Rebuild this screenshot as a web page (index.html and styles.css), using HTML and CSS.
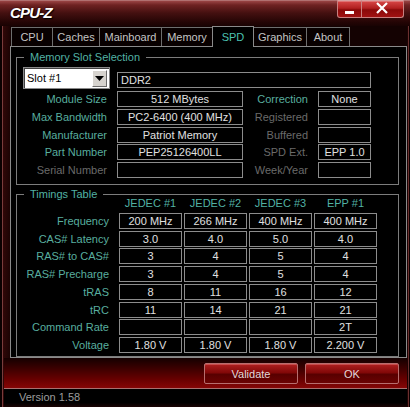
FILE: index.html
```html
<!DOCTYPE html>
<html>
<head>
<meta charset="utf-8">
<title>CPU-Z</title>
<link rel="stylesheet" href="styles.css">
</head>
<body>
<div class="window">
  <div class="titlebar">
    <span class="title">CPU-Z</span>
    <div class="winbtns">
      <span class="wbtn min"><svg width="25" height="17" viewBox="0 0 25 17"><rect x="8" y="11" width="9" height="3" fill="#fff"/></svg></span>
      <span class="wbtn close"><svg width="42" height="17" viewBox="0 0 42 17"><path d="M16 3 L26 13 M26 3 L16 13" stroke="#fff" stroke-width="2.2" fill="none"/></svg></span>
    </div>
  </div>

  <div class="tabs">
    <span class="tab w-cpu">CPU</span>
    <span class="tab w-caches">Caches</span>
    <span class="tab w-main">Mainboard</span>
    <span class="tab w-mem">Memory</span>
    <span class="tab w-spd active">SPD</span>
    <span class="tab w-gfx">Graphics</span>
    <span class="tab w-about">About</span>
  </div>

  <div class="panel">
    <fieldset class="group slots">
      <legend>Memory Slot Selection</legend>
      <div class="slot-row">
        <div class="select">
          <span class="select-text">Slot #1</span>
          <span class="select-arrow"><svg width="9" height="5" viewBox="0 0 9 5"><path d="M0 0 H9 L4.5 5 Z" fill="#000"/></svg></span>
        </div>
        <div class="box type">DDR2</div>
      </div>
      <div class="info-grid">
        <span class="lbl">Module Size</span><span class="box">512 MBytes</span>
        <span class="lbl">Correction</span><span class="box">None</span>

        <span class="lbl">Max Bandwidth</span><span class="box">PC2-6400 (400 MHz)</span>
        <span class="lbl dim">Registered</span><span class="box"></span>

        <span class="lbl">Manufacturer</span><span class="box">Patriot Memory</span>
        <span class="lbl dim">Buffered</span><span class="box"></span>

        <span class="lbl">Part Number</span><span class="box">PEP25126400LL</span>
        <span class="lbl dim">SPD Ext.</span><span class="box">EPP 1.0</span>

        <span class="lbl dim">Serial Number</span><span class="box"></span>
        <span class="lbl dim">Week/Year</span><span class="box"></span>
      </div>
    </fieldset>

    <fieldset class="group timings">
      <legend>Timings Table</legend>
      <div class="timing-grid">
        <span></span>
        <span class="hdr">JEDEC #1</span><span class="hdr">JEDEC #2</span><span class="hdr">JEDEC #3</span><span class="hdr">EPP #1</span>

        <span class="lbl">Frequency</span>
        <span class="box">200 MHz</span><span class="box">266 MHz</span><span class="box">400 MHz</span><span class="box">400 MHz</span>

        <span class="lbl">CAS# Latency</span>
        <span class="box">3.0</span><span class="box">4.0</span><span class="box">5.0</span><span class="box">4.0</span>

        <span class="lbl">RAS# to CAS#</span>
        <span class="box">3</span><span class="box">4</span><span class="box">5</span><span class="box">4</span>

        <span class="lbl">RAS# Precharge</span>
        <span class="box">3</span><span class="box">4</span><span class="box">5</span><span class="box">4</span>

        <span class="lbl">tRAS</span>
        <span class="box">8</span><span class="box">11</span><span class="box">16</span><span class="box">12</span>

        <span class="lbl">tRC</span>
        <span class="box">11</span><span class="box">14</span><span class="box">21</span><span class="box">21</span>

        <span class="lbl">Command Rate</span>
        <span class="box"></span><span class="box"></span><span class="box"></span><span class="box">2T</span>

        <span class="lbl">Voltage</span>
        <span class="box">1.80 V</span><span class="box">1.80 V</span><span class="box">1.80 V</span><span class="box">2.200 V</span>
      </div>
    </fieldset>
  </div>

  <div class="footer">
    <button class="btn">Validate</button>
    <button class="btn">OK</button>
  </div>
  <div class="status">Version 1.58</div>
</div>
</body>
</html>
```

FILE: styles.css
```css
* {
  box-sizing: border-box;
}

html,
body {
  margin: 0;
  padding: 0;
}

body {
  width: 410px;
  height: 407px;
  overflow: hidden;
  background: #000;
  font-family: "Liberation Sans", Arial, sans-serif;
  font-size: 11px;
}

/* window frame: dark maroon side borders with a thin highlight */
.window {
  width: 410px;
  height: 407px;
  display: flex;
  flex-direction: column;
  background:
    linear-gradient(to right,
      #0a0000 0, #0a0000 2px,
      #7a3c3c 2px, #7a3c3c 3px,
      #300808 3px, #1c0303 10px,
      transparent 10px),
    linear-gradient(to left,
      #0a0000 0, #0a0000 1px,
      #6a3030 1px, #6a3030 2px,
      #1c0303 2px, #1c0303 3px,
      transparent 3px),
    #140202;
}

/* ---------- title bar ---------- */
.titlebar {
  height: 26px;
  flex: none;
  display: flex;
  align-items: flex-start;
  background: linear-gradient(to bottom, #9a4444 0, #6e2222 4px, #441010 12px, #240505 21px, #160202 26px);
  border-top: 1px solid #b07070;
}

.title {
  padding: 3px 0 0 10px;
  color: #fff;
  font-family: "Liberation Sans", Arial, sans-serif;
  font-weight: bold;
  font-style: italic;
  font-size: 15px;
  letter-spacing: -0.8px;
  text-shadow: 1px 1px 1px #000, 0 0 2px #300;
}

.winbtns {
  margin-left: auto;
  margin-right: 6px;
  margin-top: -1px;
  display: flex;
}

.wbtn {
  display: block;
  height: 18px;
  border: 1px solid #c88080;
  border-top-color: #d8a0a0;
  background: linear-gradient(to bottom, #d84848 0, #b02020 45%, #8a0a0a 55%, #a01212 100%);
  box-shadow: inset 0 1px 0 rgba(255, 255, 255, 0.25);
}

.wbtn svg {
  display: block;
  margin: -1px 0 0 -1px;
}

.wbtn.min {
  width: 25px;
  border-radius: 0 0 0 3px;
}

.wbtn.close {
  width: 42px;
  border-left: none;
  border-radius: 0 0 3px 0;
}

/* ---------- tabs ---------- */
.tabs {
  height: 20px;
  flex: none;
  display: flex;
  align-items: flex-end;
  margin-left: 11px;
  position: relative;
  z-index: 1;
}

.tab {
  height: 19px;
  display: flex;
  align-items: center;
  justify-content: center;
  color: #c4c4c4;
  font-size: 11px;
  background: #080000;
  border: 1px solid #6e6e6e;
  border-bottom: none;
  border-left: none;
}

.tab:first-child {
  border-left: 1px solid #6e6e6e;
}

.tab.active {
  height: 21px;
  margin-bottom: -1px;
  color: #4cc2b0;
  background: #000;
  border-left: 1px solid #8a8a8a;
  border-color: #8a8a8a;
  padding-bottom: 1px;
}

.w-cpu { width: 42px; }
.w-caches { width: 47px; }
.w-main { width: 62px; }
.w-mem { width: 51px; margin-right: -1px; }
.w-spd { width: 42px; }
.w-gfx { width: 53px; }
.w-about { width: 43px; }

/* ---------- main panel ---------- */
.panel {
  height: 312px;
  flex: none;
  margin: 0 3px 0 10px;
  background: #000;
  border: 1px solid #8a8a8a;
  padding: 0 7px 0 5px;
}

.group {
  margin: 0;
  padding: 0;
  border: 1px solid #7c7c7c;
  min-width: 0;
}

.group legend {
  margin-left: 7px;
  padding: 0 6px;
  line-height: 10px;
  font-size: 11px;
  color: #52b2a4;
  white-space: nowrap;
}

.slots {
  margin-top: 5px;
  padding: 5px 0 6px 0;
}

.timings {
  margin-top: 4px;
  padding: 0 0 3px 0;
}

.lbl {
  text-align: right;
  padding-right: 10px;
  color: #58ae9f;
  line-height: 16px;
  white-space: nowrap;
}

.lbl.dim {
  color: #6a6a6a;
}

.box {
  height: 16px;
  line-height: 14px;
  border: 1px solid #8c8c8c;
  color: #e0e0e0;
  text-align: center;
  white-space: nowrap;
  overflow: hidden;
}

/* slot selector row */
.slot-row {
  display: flex;
  align-items: flex-start;
}

.select {
  margin-left: 6px;
  width: 87px;
  height: 22px;
  display: flex;
  align-items: center;
  background: #fff;
  border: 1px solid #8a8a8a;
  box-shadow: inset 1px 1px 0 #404040;
  padding: 2px;
}

.select-text {
  flex: 1;
  color: #000;
  padding-left: 1px;
  font-size: 11px;
}

.select-arrow {
  width: 15px;
  height: 17px;
  display: flex;
  align-items: center;
  justify-content: center;
  background: #d6d3ce;
  border: 1px solid;
  border-color: #fff #6a6a6a #6a6a6a #fff;
}

.box.type {
  margin: 5px 0 0 7px;
  width: 254px;
  text-align: left;
  padding-left: 3px;
}

.info-grid {
  margin-top: 2px;
  display: grid;
  grid-template-columns: 100px 126px 75px 53px;
  grid-auto-rows: 16px;
  row-gap: 1.75px;
}

/* timings table */
.timing-grid {
  margin-top: -2px;
  display: grid;
  grid-template-columns: 100px 63px 63px 63px 63px;
  grid-template-rows: 14px;
  grid-auto-rows: 16px;
  column-gap: 2px;
  row-gap: 1.75px;
}

.timing-grid .lbl {
  padding-right: 8px;
}

.hdr {
  text-align: center;
  color: #52b2a4;
  line-height: 13px;
  white-space: nowrap;
}

/* ---------- footer ---------- */
.footer {
  height: 31px;
  flex: none;
  display: flex;
  justify-content: flex-end;
  align-items: flex-start;
  gap: 7px;
  padding: 5px 8px 0 0;
  margin: 0 3px 0 4px;
  background: linear-gradient(to bottom, #140000 0, #360000 30%, #660000 70%, #860606 100%);
  border-bottom: 1px solid #a87070;
}

.btn {
  width: 94px;
  height: 21px;
  padding: 0;
  font-family: "Liberation Sans", Arial, sans-serif;
  font-size: 11px;
  color: #e4d8d8;
  border: 1px solid #b86e6e;
  border-radius: 2px;
  background: linear-gradient(to bottom, #b02020 0, #820808 45%, #580000 55%, #6a0202 100%);
  box-shadow: inset 0 1px 0 rgba(255, 160, 160, 0.35);
}

.status {
  flex: 1;
  padding: 2px 0 0 15px;
  color: #9c9c9c;
  font-size: 11px;
  line-height: 13px;
  background: linear-gradient(to bottom, #000 0, #000 75%, #1a0404 100%);
  margin: 0 3px 0 4px;
}
```
